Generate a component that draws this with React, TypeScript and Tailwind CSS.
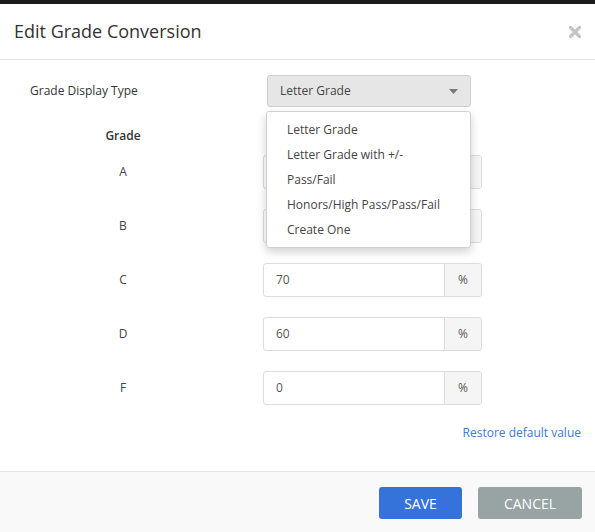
const grades = [
  { letter: 'A', value: '90' },
  { letter: 'B', value: '80' },
  { letter: 'C', value: '70' },
  { letter: 'D', value: '60' },
  { letter: 'F', value: '0' },
];

const displayTypes = [
  'Letter Grade',
  'Letter Grade with +/-',
  'Pass/Fail',
  'Honors/High Pass/Pass/Fail',
  'Create One',
];

function CloseIcon() {
  return (
    <svg width="14" height="14" viewBox="0 0 14 14" aria-hidden="true">
      <path
        d="M2.5 2.5 L11.5 11.5 M11.5 2.5 L2.5 11.5"
        stroke="#c4c4c4"
        strokeWidth="3.2"
        strokeLinecap="round"
      />
    </svg>
  );
}

function GradeRow({ letter, value }: { letter: string; value: string }) {
  return (
    <div className="flex items-center">
      <div className="w-[246px] text-center text-[12px] text-[#444]">{letter}</div>
      <div className="ml-[17px] flex h-[34px] w-[219px] rounded-[3px] border border-[#dcdcdc]">
        <div className="flex flex-1 items-center pl-3 text-[12px] text-[#555]">{value}</div>
        <div className="flex w-[37px] items-center justify-center rounded-r-[3px] border-l border-[#dcdcdc] bg-[#f5f5f5] text-[12px] text-[#555]">
          %
        </div>
      </div>
    </div>
  );
}

export default function App() {
  return (
    <div
      className="flex h-[532px] w-[595px] flex-col overflow-hidden bg-white"
      style={{ fontFamily: '"Open Sans", "Noto Sans", sans-serif' }}
    >
      <div className="h-[4px] shrink-0 bg-[#1b1b1b]" />

      <div className="flex h-[56px] shrink-0 items-center justify-between border-b border-[#e5e5e5] pl-[14px] pr-[13px]">
        <h1 className="text-[18px] text-[#333]">Edit Grade Conversion</h1>
        <CloseIcon />
      </div>

      <div className="relative flex flex-1 flex-col pt-[15px]">
        <div className="flex items-center">
          <div className="w-[267px] pl-[30px] text-[12px] text-[#333]">Grade Display Type</div>
          <div className="flex h-[32px] w-[204px] items-center justify-between rounded-[3px] border border-[#cfcfcf] bg-[#e6e6e6] pl-3 pr-[12px] text-[12px] text-[#444]">
            <span>Letter Grade</span>
            <svg width="9" height="5" viewBox="0 0 9 5" aria-hidden="true">
              <path d="M0 0 H9 L4.5 5 Z" fill="#7a7a7a" />
            </svg>
          </div>
        </div>

        <div className="mt-[19px] flex h-[20px] items-center">
          <div className="w-[246px] text-center text-[12px] font-semibold text-[#333]">Grade</div>
        </div>

        <div className="mt-[9px] flex flex-col gap-[20px]">
          {grades.map((g) => (
            <GradeRow key={g.letter} letter={g.letter} value={g.value} />
          ))}
        </div>

        <div className="mt-[19px] flex justify-end pr-[14px]">
          <span className="text-[12px] text-[#3a7bd5]">Restore default value</span>
        </div>

        <div className="absolute left-[266px] top-[51px] w-[205px] rounded-[3px] border border-[#d0d0d0] bg-white py-[5px] shadow-[0_4px_10px_rgba(0,0,0,0.18)]">
          {displayTypes.map((t) => (
            <div key={t} className="flex h-[25px] items-center pl-[20px] text-[12px] text-[#444]">
              {t}
            </div>
          ))}
        </div>
      </div>

      <div className="flex h-[61px] shrink-0 items-start justify-end gap-[16px] border-t border-[#e5e5e5] bg-[#f9f9f9] pr-[13px] pt-[15px]">
        <button className="h-[32px] w-[83px] rounded-[3px] bg-[#3572d9] text-[14px] text-white">SAVE</button>
        <button className="h-[32px] w-[104px] rounded-[3px] bg-[#97a4a3] text-[14px] text-white">CANCEL</button>
      </div>
    </div>
  );
}
